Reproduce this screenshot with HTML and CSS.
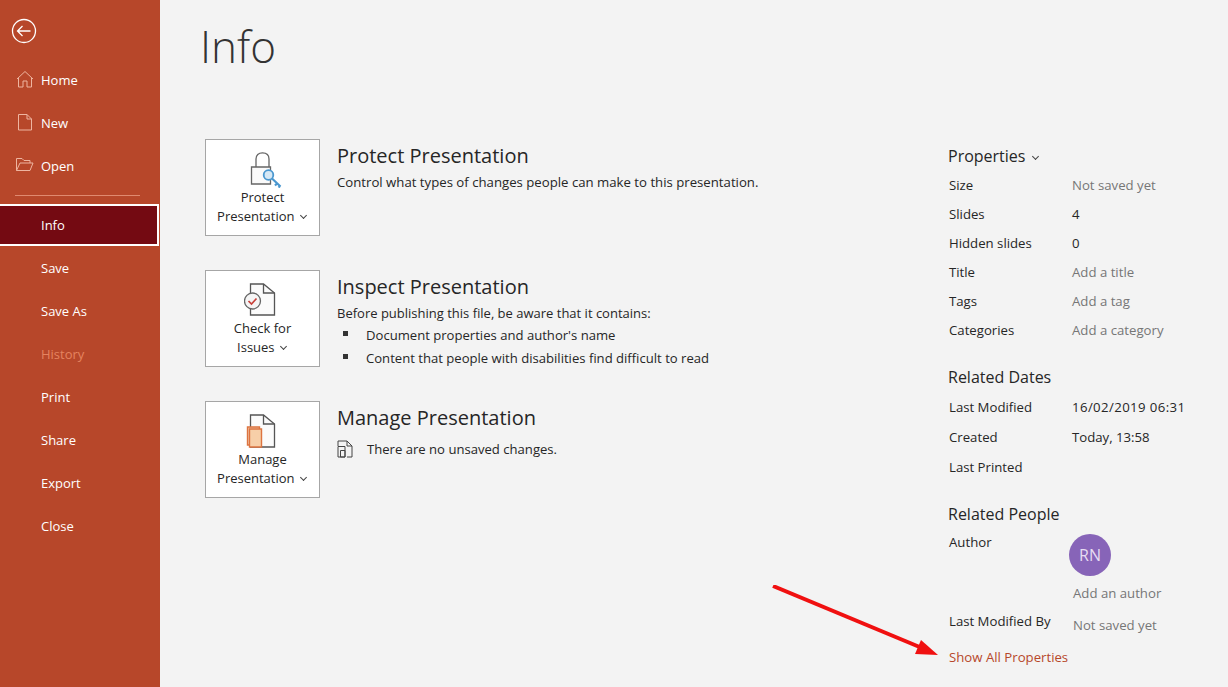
FILE: index.html
```html
<!DOCTYPE html>
<html lang="en">
<head>
    <meta charset="UTF-8">
    <title>Info</title>
    <link rel="stylesheet" href="styles.css">
</head>
<body>

<div class="app">
    <!-- Sidebar -->
    <nav class="sidebar">
        <div class="back">
            <svg width="26" height="26" viewBox="0 0 26 26" fill="none" stroke="#fff" stroke-width="1.3">
                <circle cx="13" cy="13" r="11.5"/>
                <path d="M6.5 13H19.5M11.5 8L6.5 13L11.5 18"/>
            </svg>
        </div>
        <a class="nav-item">
            <svg class="nav-icon" width="18" height="18" viewBox="0 0 18 18" fill="none" stroke="#eeb5a0">
                <path d="M1 9L9 1.5L17 9M2.5 8V17H7V11H11V17H15.5V8"/>
            </svg>
            Home
        </a>
        <a class="nav-item">
            <svg class="nav-icon" width="18" height="18" viewBox="0 0 18 18" fill="none" stroke="#eeb5a0">
                <path d="M2.5 1.5H11L15.5 6V17H2.5ZM11 1.5V6H15.5"/>
            </svg>
            New
        </a>
        <a class="nav-item">
            <svg class="nav-icon" width="18" height="18" viewBox="0 0 18 18" fill="none" stroke="#eeb5a0">
                <path d="M0.5 14.5V2.5H6L8 4.5H14V7M0.5 14.5L4 7H17L14 14.5Z"/>
            </svg>
            Open
        </a>
        <div class="nav-sep"></div>
        <a class="nav-item active">Info</a>
        <a class="nav-item">Save</a>
        <a class="nav-item">Save As</a>
        <a class="nav-item disabled">History</a>
        <a class="nav-item">Print</a>
        <a class="nav-item">Share</a>
        <a class="nav-item">Export</a>
        <a class="nav-item">Close</a>
    </nav>

    <!-- Main -->
    <div class="main">
        <h1>Info</h1>
        <div class="columns">
            <div class="sections">

                <div class="section">
                    <div class="tile">
                        <svg class="tile-icon" width="38" height="36" viewBox="0 0 38 36" fill="none">
                            <path d="M12 15V7C12 3 14.5 0.8 18.5 0.8S25 3 25 7V15" stroke="#666" stroke-width="1.3"/>
                            <path d="M7.5 15H26.5V32H7.5Z" fill="#fafafa" stroke="#666" stroke-width="1.3"/>
                            <circle cx="24.5" cy="23" r="4.8" fill="#d6e8f5" stroke="#4a97cf" stroke-width="1.8"/>
                            <path d="M28 26.5L36.5 34.5M33 31.5L31 33.5M36 34L34.5 35.5" stroke="#4a97cf" stroke-width="2.2"/>
                        </svg>
                        <span class="tile-label">Protect<br>Presentation <i class="chev"></i></span>
                    </div>
                    <div class="section-text">
                        <h2>Protect Presentation</h2>
                        <p>Control what types of changes people can make to this presentation.</p>
                    </div>
                </div>

                <div class="section">
                    <div class="tile">
                        <svg class="tile-icon" width="38" height="36" viewBox="0 0 38 36" fill="none">
                            <path d="M6.5 1H19.5L30.5 10V32H6.5Z" fill="#fbfbfb" stroke="#555" stroke-width="1.3"/>
                            <path d="M19.5 1V10H30.5" stroke="#555" stroke-width="1.3"/>
                            <circle cx="8.5" cy="18" r="8" fill="#f5f5f5" stroke="#666" stroke-width="1.3"/>
                            <path d="M4.5 18L7.5 21L12.5 15.5" stroke="#c8403a" stroke-width="1.7"/>
                        </svg>
                        <span class="tile-label">Check for<br>Issues <i class="chev"></i></span>
                    </div>
                    <div class="section-text">
                        <h2>Inspect Presentation</h2>
                        <p class="tight">Before publishing this file, be aware that it contains:</p>
                        <ul>
                            <li>Document properties and author's name</li>
                            <li>Content that people with disabilities find difficult to read</li>
                        </ul>
                    </div>
                </div>

                <div class="section">
                    <div class="tile">
                        <svg class="tile-icon" width="38" height="36" viewBox="0 0 38 36" fill="none">
                            <path d="M6.5 1H19.5L30.5 10V33H6.5Z" fill="#fbfbfb" stroke="#555" stroke-width="1.3"/>
                            <path d="M19.5 1V10H30.5" stroke="#555" stroke-width="1.3"/>
                            <path d="M3.5 13H15.5V31H3.5Z" fill="#f3c9ac" stroke="#dd7440" stroke-width="1.4"/>
                            <path d="M5.5 15H17.5V33H5.5Z" fill="#f7cfa8" stroke="#dd7440" stroke-width="1.4"/>
                        </svg>
                        <span class="tile-label">Manage<br>Presentation <i class="chev"></i></span>
                    </div>
                    <div class="section-text">
                        <h2>Manage Presentation</h2>
                        <div class="no-changes">
                            <svg width="16" height="18" viewBox="0 0 16 18" fill="none" stroke="#444">
                                <path d="M1 6V1H10L15 6V17H10M10 1V6H15"/>
                                <path d="M1 6.5H8V17H1Z"/>
                                <path d="M3.5 10.5H8V17H3.5Z"/>
                            </svg>
                            There are no unsaved changes.
                        </div>
                    </div>
                </div>

            </div>

            <!-- Properties -->
            <aside class="props">
                <h3 class="props-head">Properties <i class="chev"></i></h3>
                <div class="prop-row"><span>Size</span><span class="muted">Not saved yet</span></div>
                <div class="prop-row"><span>Slides</span><span>4</span></div>
                <div class="prop-row"><span>Hidden slides</span><span>0</span></div>
                <div class="prop-row"><span>Title</span><span class="muted">Add a title</span></div>
                <div class="prop-row"><span>Tags</span><span class="muted">Add a tag</span></div>
                <div class="prop-row"><span>Categories</span><span class="muted">Add a category</span></div>

                <h3 class="props-sub">Related Dates</h3>
                <div class="prop-row date"><span>Last Modified</span><span class="stamp">16/02/2019 06:31</span></div>
                <div class="prop-row date"><span>Created</span><span>Today, 13:58</span></div>
                <div class="prop-row date"><span>Last Printed</span><span></span></div>

                <h3 class="props-sub people">Related People</h3>
                <div class="author">
                    <span>Author</span>
                    <div>
                        <div class="avatar">RN</div>
                        <div class="muted add-author">Add an author</div>
                    </div>
                </div>
                <div class="prop-row modified-by"><span>Last Modified By</span><span class="muted">Not saved yet</span></div>
                <a class="show-all">Show All Properties</a>
            </aside>
        </div>
    </div>
</div>

<!-- Red annotation arrow -->
<svg class="arrow" width="180" height="80" viewBox="0 0 180 80">
    <path d="M1 1L150 63" stroke="#f01010" stroke-width="4" fill="none"/>
    <path d="M166 70L143 69L149 55Z" fill="#f01010"/>
</svg>

</body>
</html>
```

FILE: styles.css
```css
body {
    font-family: "Open Sans", "Noto Sans", sans-serif;
    font-size: 13px;
    margin: 0;
    padding: 0;
    background: #f3f3f3;
    color: #262626;
    overflow: hidden;
}
.app {
    display: flex;
    height: 687px;
}
.sidebar {
    width: 160px;
    flex-shrink: 0;
    background: #b7472a;
    color: #fff;
    padding-top: 18px;
    box-sizing: border-box;
}
.back {
    padding-left: 11px;
    height: 26px;
    margin-bottom: 14px;
}
.nav-item {
    display: flex;
    align-items: center;
    height: 43px;
    padding-left: 41px;
    position: relative;
    color: #fff;
}
.nav-icon {
    position: absolute;
    left: 16px;
    top: 12px;
}
.nav-sep {
    height: 1px;
    background: #e08a70;
    margin: 8px 20px 8px 15px;
}
.nav-item.active {
    height: 42px;
    background: #740a12;
    border: 2px solid #fff;
    border-left: none;
    width: 159px;
    box-sizing: border-box;
}
.nav-item.disabled {
    color: #e5835f;
}
.main {
    flex: 1;
    min-width: 0;
}
h1 {
    font-weight: 300;
    font-size: 44px;
    line-height: 60px;
    margin: 16px 0 0 40px;
    color: #333;
}
.columns {
    display: flex;
    justify-content: space-between;
    margin-top: 63px;
    padding-left: 45px;
}
.section {
    display: flex;
    height: 97px;
    margin-bottom: 34px;
}
.tile {
    width: 115px;
    height: 97px;
    box-sizing: border-box;
    background: #fff;
    border: 1px solid #a6a6a6;
    display: flex;
    flex-direction: column;
    align-items: center;
    padding-top: 12px;
    margin-right: 17px;
}
.tile-icon {
    height: 36px;
    flex-shrink: 0;
}
.tile-label {
    text-align: center;
    line-height: 19px;
}
.chev {
    display: inline-block;
    width: 4px;
    height: 4px;
    border-right: 1px solid #444;
    border-bottom: 1px solid #444;
    transform: rotate(45deg);
    margin: 0 2px 3px 3px;
}
.section-text {
    font-size: 13.1px;
}
.section-text h2 {
    font-weight: 400;
    font-size: 20px;
    line-height: 26px;
    margin: 4px 0 3px;
}
.section-text p {
    margin: 0;
    line-height: 20px;
    font-size: 13.2px;
}
.section-text p.tight {
    font-size: 13px;
}
.section-text ul {
    list-style: none;
    margin: 1px 0 0;
    padding: 0;
}
.section-text li {
    line-height: 23px;
    padding-left: 29px;
    position: relative;
}
.section-text li::before {
    content: "";
    position: absolute;
    left: 6px;
    top: 7px;
    width: 5px;
    height: 5px;
    background: #333;
}
.no-changes {
    display: flex;
    align-items: center;
    gap: 14px;
    margin-top: 7px;
    line-height: 22px;
}
.props {
    width: 280px;
    flex-shrink: 0;
    margin-top: 6px;
    font-size: 13.2px;
}
.props-head, .props-sub {
    font-weight: 400;
    font-size: 16px;
    line-height: 22px;
    margin: 0;
}
.props-head {
    margin-bottom: 4px;
}
.props-sub {
    margin-top: 21px;
    margin-bottom: 4px;
}
.props-sub.people {
    margin-top: 21px;
    margin-bottom: 8px;
}
.prop-row {
    display: grid;
    grid-template-columns: 123px 1fr;
    height: 29px;
    line-height: 29px;
    padding-left: 1px;
}
.prop-row.date {
    height: 30px;
    line-height: 30px;
}
.stamp {
    letter-spacing: 0.4px;
}
.muted {
    color: #767676;
}
.author {
    display: grid;
    grid-template-columns: 120px 1fr;
    padding-left: 1px;
}
.avatar {
    width: 42px;
    height: 42px;
    border-radius: 50%;
    background: #8764b8;
    color: #e6dcf2;
    font-size: 16px;
    line-height: 42px;
    text-align: center;
    margin-top: 1px;
}
.add-author {
    margin: 7px 0 0 4px;
    line-height: 20px;
}
.modified-by {
    grid-template-columns: 124px 1fr;
    margin-top: 4px;
}
.modified-by .muted {
    padding-top: 4px;
}
.show-all {
    display: block;
    color: #b7472a;
    margin-top: 11px;
    line-height: 20px;
    padding-left: 1px;
}
.arrow {
    position: absolute;
    left: 772px;
    top: 585px;
}
```
